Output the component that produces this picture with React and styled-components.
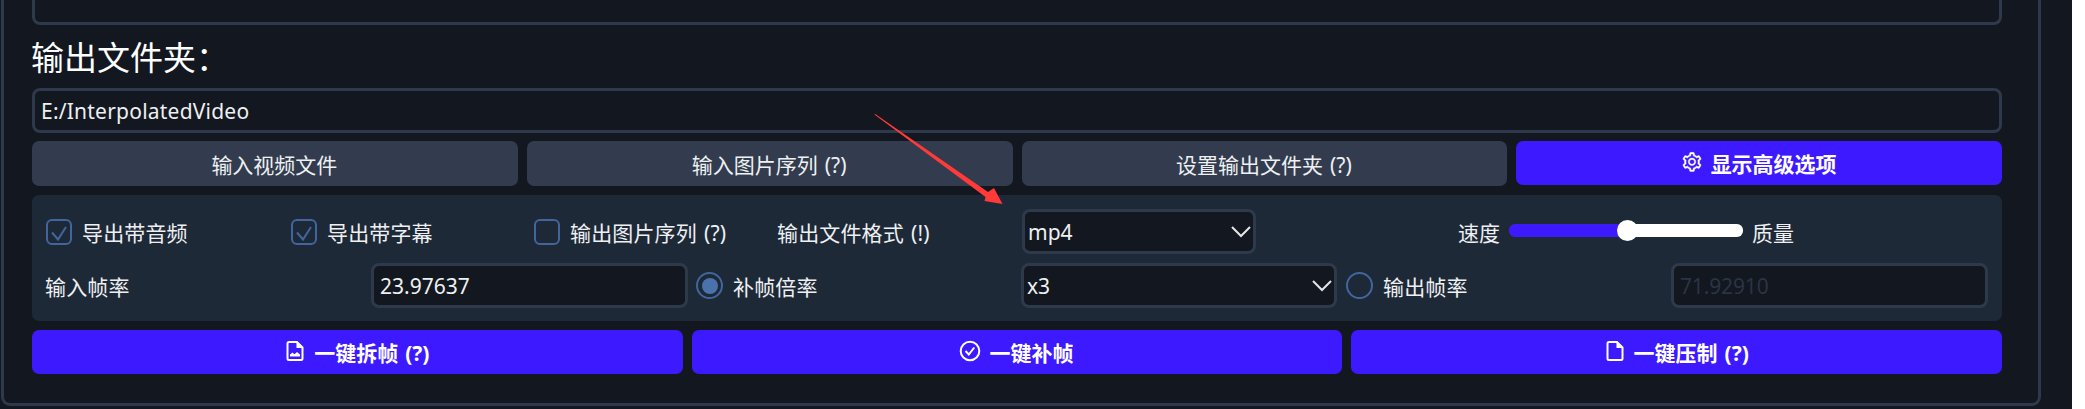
import React from "react";
import styled, { createGlobalStyle } from "styled-components";
import { AiOutlineSetting } from "react-icons/ai";

const c = {
  bg: "#13171f",
  line: "#2e394b",
  button: "#323c4e",
  panel: "#1e2938",
  primary: "#3d19ff",
  accent: "#41669e",
  text: "#eef0f2",
};

const GlobalStyle = createGlobalStyle`
  * { box-sizing: border-box; }
  body {
    margin: 0;
    background: #fff;
    color: ${c.text};
    font-family: "Noto Sans", "Noto Sans CJK SC", sans-serif;
    font-size: 21px;
    word-spacing: 1.5px;
    overflow: hidden;
  }
`;

const Window = styled.div`
  width: 2072px;
  height: 409px;
  padding: 0 0 3px 1px;
  background: ${c.bg};
  overflow: hidden;
`;

const Frame = styled.main`
  width: 2040px;
  height: 406px;
  padding: 0 36px 0 28px;
  border: 3px solid ${c.line};
  border-top: 0;
  border-radius: 0 0 9px 9px;
  display: flex;
  flex-direction: column;
`;

const ListBox = styled.div`
  flex: none;
  height: 25px;
  border: 3px solid ${c.line};
  border-top: 0;
  border-radius: 0 0 8px 8px;
`;

const Heading = styled.h1`
  flex: none;
  margin: 0 0 0 -1px;
  height: 63px;
  font-family: "Noto Sans CJK SC", sans-serif;
  font-size: 33px;
  font-weight: 400;
  line-height: 63px;
  color: #fff;
  white-space: nowrap;
`;

const Field = styled.div`
  flex: none;
  display: flex;
  align-items: center;
  justify-content: space-between;
  width: ${(p) => p.$w || "auto"};
  height: 45px;
  padding: 0 ${(p) => p.$pr || 4}px 0 ${(p) => p.$pl || 6}px;
  border: 3px solid ${c.line};
  border-radius: 8px;
  background: ${c.bg};
  color: ${(p) => (p.$off ? "#2a3445" : c.text)};
`;

const Value = styled.span`
  white-space: nowrap;
  letter-spacing: ${(p) => p.$ls || 0}px;
`;

const Buttons = styled.div`
  flex: none;
  display: grid;
  grid-template-columns: repeat(${(p) => p.$n}, 1fr);
  gap: 9px;
  margin-top: ${(p) => p.$top}px;
  align-items: start;
`;

const Button = styled.button`
  display: flex;
  align-items: center;
  justify-content: center;
  gap: 8px;
  height: ${(p) => (p.$primary ? 44 : 45)}px;
  padding: 0 1px 0 0;
  border: 0;
  border-radius: 7px;
  background: ${(p) => (p.$primary ? c.primary : c.button)};
  color: ${(p) => (p.$primary ? "#fff" : c.text)};
  font: inherit;
  font-weight: ${(p) => (p.$primary ? 700 : 400)};
  word-spacing: 1.5px;
  white-space: nowrap;
`;

const Options = styled.section`
  flex: none;
  height: 126px;
  margin-top: 9px;
  padding: 14px 14px 0 13px;
  border-radius: 7px;
  background: ${c.panel};
  display: flex;
  flex-direction: column;
  gap: 9px;
`;

const Row = styled.div`
  display: grid;
  grid-template-columns: ${(p) => p.$cols};
  align-items: center;
  height: 45px;
`;

const Label = styled.label`
  display: flex;
  align-items: center;
  gap: ${(p) => p.$gap || 0}px;
  letter-spacing: 0.15px;
  white-space: nowrap;
`;

const Check = styled.span`
  display: flex;
  width: 26px;
  height: 26px;
  margin-left: 1px;
  border: 2.5px solid ${c.accent};
  border-radius: 6px;
  color: ${c.accent};
`;

const Radio = styled.span`
  display: flex;
  align-items: center;
  justify-content: center;
  width: 27px;
  height: 27px;
  border: 2.5px solid ${c.accent};
  border-radius: 50%;
  &::after {
    content: "";
    width: 16px;
    height: 16px;
    border-radius: 50%;
    background: ${(p) => (p.$on ? "#4a73ab" : "transparent")};
  }
`;

const SliderGroup = styled.div`
  display: flex;
  align-items: center;
  gap: 9px;
`;

const Track = styled.div`
  display: flex;
  align-items: center;
  width: 234px;
  height: 13px;
  margin-bottom: 3px;
  border-radius: 6px;
  background: linear-gradient(90deg, ${c.primary} 50%, #fff 50%);
`;

const Thumb = styled.div`
  width: 21px;
  height: 21px;
  margin-left: 108px;
  border-radius: 50%;
  background: #fff;
`;

const Icon = styled.svg.attrs({
  width: 22,
  height: 22,
  viewBox: "0 0 22 22",
  fill: "none",
  stroke: "currentColor",
  strokeWidth: 2,
})`
  flex: none;
  margin-bottom: 2px;
`;

const Gear = styled(AiOutlineSetting)`
  flex: none;
  margin-bottom: 3px;
  stroke: currentColor;
  stroke-width: 18px;
`;

const Arrow = styled.svg`
  position: absolute;
  left: 870px;
  top: 110px;
`;

const Chevron = () => (
  <svg width="22" height="14" viewBox="0 0 22 14" fill="none" stroke="#e4e6e8" strokeWidth="2">
    <path d="M2 2l9 9 9-9" />
  </svg>
);

const FileIcon = ({ image }) => (
  <Icon>
    <path d="M13 2H5a1.500 1.500 0 0 0-1.500 1.500v15A1.500 1.500 0 0 0 5 20h12a1.500 1.500 0 0 0 1.500-1.500V7.500z" />
    <path d="M12.500 2v6h6z" fill="currentColor" stroke="none" />
    {image && <path d="M6 16.500v-2l2.500-2 2 1.800 2.500-2.300 3 2.500v2z" fill="currentColor" stroke="none" />}
  </Icon>
);

const CheckCircleIcon = () => (
  <Icon>
    <circle cx="11" cy="11" r="9.300" />
    <path d="M6.500 11l3.300 3.500 5.500-7" />
  </Icon>
);

const Checkbox = ({ on, children }) => (
  <Label $gap={10}>
    <Check>
      {on && (
        <svg width="22" height="22" viewBox="0 0 22 22" fill="none" stroke="currentColor" strokeWidth="2">
          <path d="M4 11.500l6 7 8-12.500" />
        </svg>
      )}
    </Check>
    {children}
  </Label>
);

export default function App() {
  return (
    <Window>
      <GlobalStyle />
      <Frame>
        <ListBox />
        <Heading>输出文件夹：</Heading>
        <Field><Value $ls={0.22}>E:/InterpolatedVideo</Value></Field>
        <Buttons $n={4} $top={8}>
          <Button>输入视频文件</Button>
          <Button>输入图片序列 (?)</Button>
          <Button>设置输出文件夹 (?)</Button>
          <Button $primary><Gear size={22} />显示高级选项</Button>
        </Buttons>
        <Options>
          <Row $cols="245px 243px 244px 245px 436px 1fr">
            <Checkbox on>导出带音频</Checkbox>
            <Checkbox on>导出带字幕</Checkbox>
            <Checkbox>输出图片序列 (?)</Checkbox>
            <Label>输出文件格式 (!)</Label>
            <Field $w="234px" $pl={3} $pr={1}><Value>mp4</Value><Chevron /></Field>
            <SliderGroup>
              速度
              <Track><Thumb /></Track>
              质量
            </SliderGroup>
          </Row>
          <Row $cols="326px 325px 325px 325px 325px 1fr">
            <Label>输入帧率</Label>
            <Field $w="317px"><Value>23.97637</Value></Field>
            <Label $gap={10}><Radio $on />补帧倍率</Label>
            <Field $w="316px" $pl={3} $pr={1}><Value>x3</Value><Chevron /></Field>
            <Label $gap={10}><Radio />输出帧率</Label>
            <Field $w="317px" $off><Value $ls={-0.15}>71.92910</Value></Field>
          </Row>
        </Options>
        <Buttons $n={3} $top={9}>
          <Button $primary><FileIcon image />一键拆帧 (?)</Button>
          <Button $primary><CheckCircleIcon />一键补帧</Button>
          <Button $primary><FileIcon />一键压制 (?)</Button>
        </Buttons>
      </Frame>
      <Arrow width="140" height="100" viewBox="0 0 140 100">
        <path d="M4.500 3.500L118 82 124 78 132.500 94 114.500 91 115.500 87 5 5z" fill="#ff3a38" />
      </Arrow>
    </Window>
  );
}
